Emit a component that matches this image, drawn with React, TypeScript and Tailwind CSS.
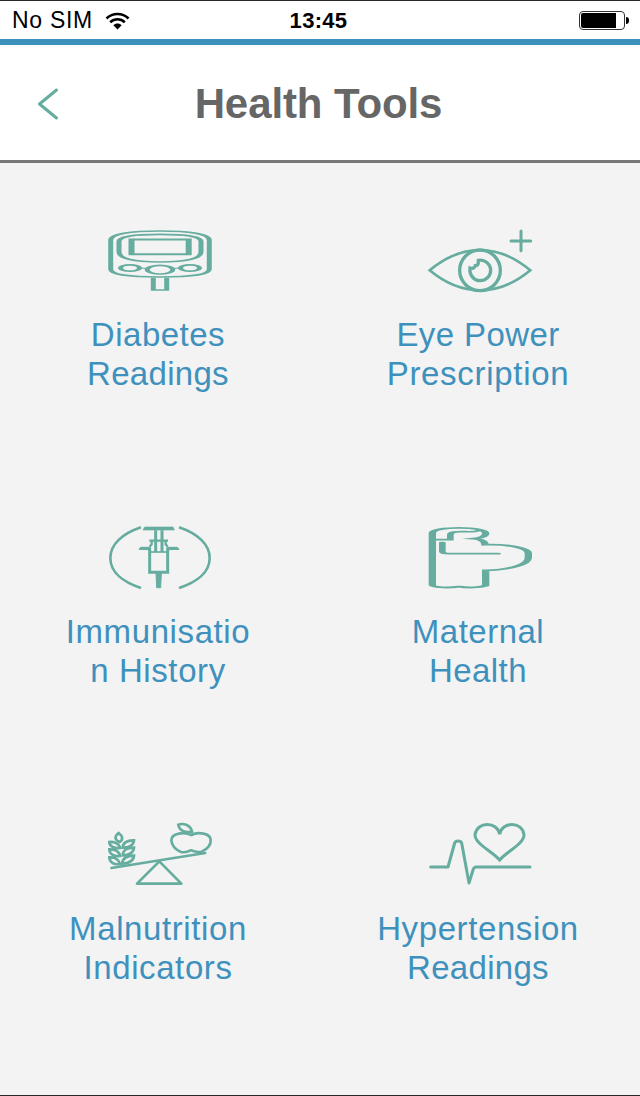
import type { ReactNode } from "react";

interface Line {
  text: string;
  className: string;
}

interface Tool {
  id: number;
  icon: ReactNode;
  lines: Line[];
}

// drawn narrow and stretched sideways, so the vertical strokes come out thicker
const MeterIcon = () => (
  <g transform="scale(3 1)" strokeWidth="5">
    <path d="M15.7 60C15.7 42 35 33 65 33S114.3 42 114.3 60V148C114.3 164 95 171 65 171S15.7 164 15.7 148Z" />
    <path d="M24 64C24 50 38 43 65 43S106 50 106 64V96C106 115 92 126 65 126S24 115 24 96Z" />
    <path d="M36.5 58.5H93.7V103H36.5Z" strokeWidth="6" />
    <ellipse cx="35" cy="144" rx="9.5" ry="9.5" />
    <ellipse cx="65" cy="149" rx="12.8" ry="13" />
    <ellipse cx="95" cy="144" rx="9.5" ry="9.5" />
    <path d="M46 145H52M78 145H84" strokeWidth="3" />
    <path d="M58.3 173V210H71.7V173" />
  </g>
);

const EyeIcon = () => (
  <>
    <path d="M44 151C92 111 143 90 195 90S298 111 346 151C298 191 247 211 195 211S92 191 44 151Z" />
    <circle cx="195" cy="151" r="61" strokeWidth="10" />
    <path d="M190 121C209 117 227 132 227 151C227 168 213 182 195 182C177 182 162 164 165 144C171 146 180 145 181 137C191 137 190 129 190 121Z" strokeWidth="10" />
    <path d="M288 63H347M318 33V92" strokeLinecap="round" strokeWidth="9" />
  </>
);

const SyringeIcon = () => (
  <>
    <path d="M138 31C82 50 46 82 46 123S82 195 138 213M252 31C308 50 344 82 344 123S308 195 252 213" />
    <path d="M149 30H234L238 39H144Z" fill="#66ad9f" strokeWidth="2" />
    <path d="M182 40V105M201 40V105" strokeWidth="9" />
    <path d="M163 71H219M170 74V82L164 89M212 74V82L218 89" strokeWidth="7" />
    <path d="M132 97L137 91H166V98ZM252 97L247 91H216V98Z" fill="#66ad9f" strokeWidth="3" />
    <path d="M164 94V166H218V94" strokeWidth="9" />
    <path d="M164 105H218" strokeWidth="5" />
    <path d="M183 168H199L197 212H185Z" fill="#66ad9f" strokeWidth="3" />
  </>
);

const MaternalIcon = () => (
  <g transform="scale(4 1)" strokeWidth="5.5">
    <path d="M13 206V48C13 38 22 32.5 33 32.5C45 32.5 53 39 53 49C53 57 50 63 44 65C50 67 52.5 74 52.5 83C70 81 85 93 85 108V122C85 142 72 158 53 160V206C48 212 40 213 33 209C25 213 16 212 13 206" />
    <path d="M12 68H26.5V53C26.5 45 31 43 38 44C43 45 47 43 49 39" strokeWidth="5" />
    <path d="M20.5 77V103C20.5 108 22 110 25 110H62" strokeWidth="5" strokeLinecap="round" />
  </g>
);

const ScaleIcon = () => (
  <>
    <path d="M49 162L331 117" strokeLinecap="round" strokeWidth="7" />
    <path d="M193 142L126 209H259Z" strokeWidth="8" strokeLinejoin="round" />
    <g strokeWidth="8">
      <path d="M71 57C83 66 86 76 74 84C59 78 57 68 71 57Z" />
      <path d="M43 84C57 83 73 88 75 102C59 103 43 99 43 84ZM43 106C57 105 73 111 75 126C59 128 43 122 43 106ZM43 130C59 129 72 136 75 150C59 153 43 146 43 130Z" />
      <path d="M117 79C116 93 101 102 83 101C83 86 98 78 117 79ZM117 101C116 116 101 124 83 124C83 109 98 101 117 101ZM117 125C116 140 101 148 81 149C83 132 98 125 117 125Z" />
    </g>
    <path d="M289 63C269 53 229 57 229 79C229 94 243 108 258 114C271 117 279 112 288 109C299 112 309 117 320 113C335 106 348 93 347 78C347 57 308 53 289 63Z" />
    <path d="M250 32C266 26 287 34 291 53C270 58 252 49 250 32Z" />
  </>
);

const HeartRateIcon = () => (
  <>
    <path d="M47 159H99L119 87C122 79 137 79 140 87L162 207L175 165C177 160 180 159 184 159H345" strokeLinecap="round" strokeLinejoin="round" strokeWidth="9" />
    <path d="M254 61C248 23 186 20 180 62C180 90 232 112 254 138C276 112 327 90 327 62C321 20 260 23 254 61Z" strokeWidth="9" />
  </>
);

const tools: Tool[] = [
  {
    id: 1,
    icon: <MeterIcon />,
    lines: [
      { text: "Diabetes", className: "tracking-[0.5px]" },
      { text: "Readings", className: "tracking-[0.3px]" },
    ],
  },
  {
    id: 2,
    icon: <EyeIcon />,
    lines: [
      { text: "Eye Power", className: "tracking-[0.4px]" },
      { text: "Prescription", className: "tracking-[0.7px]" },
    ],
  },
  {
    id: 3,
    icon: <SyringeIcon />,
    lines: [
      { text: "Immunisatio", className: "tracking-[0.6px]" },
      { text: "n History", className: "tracking-[0.6px]" },
    ],
  },
  {
    id: 4,
    icon: <MaternalIcon />,
    lines: [
      { text: "Maternal", className: "tracking-[0.5px]" },
      { text: "Health", className: "tracking-[0.4px]" },
    ],
  },
  {
    id: 5,
    icon: <ScaleIcon />,
    lines: [
      { text: "Malnutrition", className: "tracking-[0.6px]" },
      { text: "Indicators", className: "tracking-[0.6px]" },
    ],
  },
  {
    id: 6,
    icon: <HeartRateIcon />,
    lines: [
      { text: "Hypertension", className: "tracking-[0.6px]" },
      { text: "Readings", className: "tracking-[0.3px]" },
    ],
  },
];

const StatusBar = () => (
  <div className="grid h-[39px] shrink-0 grid-cols-3 items-center border-t border-[#29272b] bg-white pl-3 pr-[11px] pt-px text-[22px] text-black">
    <div className="flex items-center gap-3">
      <span className="text-[23px] tracking-[0.7px]">No SIM</span>
      <svg width="25" height="20" viewBox="0 0 26 20" fill="none" stroke="black" strokeWidth="2.6">
        <path d="M1.5 7.4C8 1.2 18 1.2 24.5 7.4M5.4 11.3C9.8 7.2 16.2 7.2 20.6 11.3" />
        <path d="M8.7 14.4C11 12 15 12 17.3 14.4L13 18.8Z" fill="black" stroke="none" />
      </svg>
    </div>
    <span className="-ml-1 text-center font-bold tracking-[0.3px]">13:45</span>
    <div className="flex items-center justify-end">
      <div className="h-[19px] w-[46px] rounded-[4px] border border-[#333] p-px">
        <div className="h-full w-[35px] rounded-l-[2px] bg-black" />
      </div>
      <div className="ml-px h-[7px] w-[3px] rounded-r-full bg-black" />
    </div>
  </div>
);

const Header = () => (
  <header className="grid h-[118px] shrink-0 grid-cols-[64px_1fr_67px] items-center border-b-[3px] border-[#777978] bg-white pt-0.5">
    <svg className="ml-9" width="24" height="34" viewBox="0 0 24 34" fill="none" stroke="#66ad9f" strokeWidth="3">
      <path d="M20.5 3L3.5 17L20.5 31" strokeLinecap="round" strokeLinejoin="round" />
    </svg>
    <h1 className="text-center text-[42px] font-bold tracking-[-0.1px] text-[#666]">Health Tools</h1>
  </header>
);

const App = () => {
  return (
    <div className="flex h-[1096px] w-[640px] flex-col overflow-hidden bg-[#f3f3f3] font-['Liberation_Sans',Arial,sans-serif]">
      <StatusBar />
      <div className="h-1.5 shrink-0 bg-[#3a91bb]" />
      <Header />
      <main className="grid h-[932px] shrink-0 grid-cols-2 auto-rows-[297px] content-start overflow-hidden pt-[57px]">
        {tools.map((tool) => (
          <div key={tool.id} className="flex flex-col items-center">
            <svg width="130" height="80" viewBox="0 0 390 240" fill="none" stroke="#66ad9f" strokeWidth="8">
              {tool.icon}
            </svg>
            <div className="mt-4 mr-1 flex flex-col items-center text-[33px] leading-[38.5px] text-[#3f91bd]">
              {tool.lines.map((line) => (
                <span key={line.text} className={line.className}>
                  {line.text}
                </span>
              ))}
            </div>
          </div>
        ))}
      </main>
      <div className="h-px shrink-0 bg-[#29272b]" />
    </div>
  );
};

export default App;
